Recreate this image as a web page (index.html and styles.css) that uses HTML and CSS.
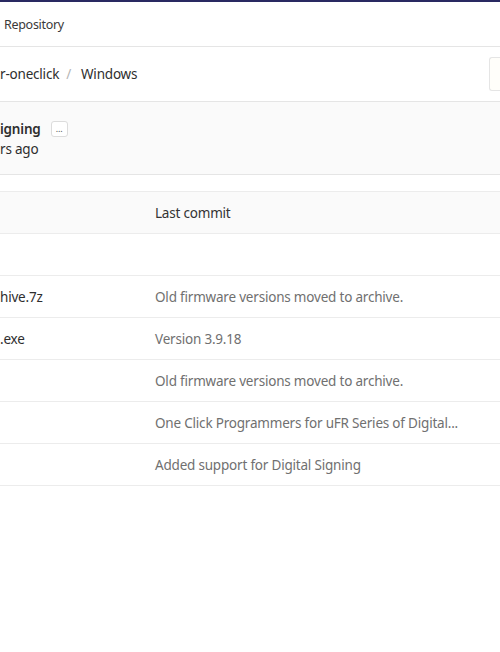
FILE: index.html
```html
<!DOCTYPE html>
<html lang="en">
<head>
    <meta charset="UTF-8">
    <title>Windows · Repository</title>
    <link rel="stylesheet" href="styles.css">
</head>
<body>

    <div class="top-line"></div>

    <div class="crumbs-bar">
        <span class="crumb">Repository</span>
    </div>

    <div class="tree-bar">
        <div class="path">
            <span class="path-part">r-oneclick</span>
            <span class="sep">/</span>
            <span class="path-part">Windows</span>
        </div>
        <div class="tree-btn"></div>
    </div>

    <div class="commit-box">
        <div class="commit-title">
            <strong>igning</strong>
            <span class="more">...</span>
        </div>
        <div class="commit-time">rs ago</div>
    </div>

    <table class="files">
        <thead>
            <tr>
                <th class="name"></th>
                <th>Last commit</th>
            </tr>
        </thead>
        <tbody>
            <tr><td class="name"></td><td class="msg"></td></tr>
            <tr><td class="name">hive.7z</td><td class="msg">Old firmware versions moved to archive.</td></tr>
            <tr><td class="name">.exe</td><td class="msg">Version 3.9.18</td></tr>
            <tr><td class="name"></td><td class="msg">Old firmware versions moved to archive.</td></tr>
            <tr><td class="name"></td><td class="msg">One Click Programmers for uFR Series of Digital...</td></tr>
            <tr><td class="name"></td><td class="msg">Added support for Digital Signing</td></tr>
        </tbody>
    </table>

</body>
</html>
```

FILE: styles.css
```css
body {
    font-family: "Noto Sans", "Open Sans", sans-serif;
    font-size: 13.5px;
    letter-spacing: -0.2px;
    color: #2e2e2e;
    background-color: #ffffff;
    margin: 0;
    overflow: hidden;
}
.top-line {
    height: 2px;
    background-color: #292961;
}
.crumbs-bar {
    height: 44px;
    display: flex;
    align-items: center;
    padding-left: 4px;
    border-bottom: 1px solid #e5e5e5;
    font-size: 12.5px;
    letter-spacing: -0.3px;
    color: #3a3a3a;
}
.tree-bar {
    height: 54px;
    display: flex;
    align-items: center;
    justify-content: space-between;
    border-bottom: 1px solid #e5e5e5;
}
.path {
    display: flex;
    align-items: center;
    color: #2e2e2e;
}
.sep {
    color: #b5b5b5;
    margin: 0 10px 0 7px;
}
.tree-btn {
    width: 14px;
    height: 32px;
    border: 1px solid #e5e5e5;
    border-right: none;
    border-radius: 3px 0 0 3px;
    margin-right: -4px;
    background-color: #fffefa;
}
.commit-box {
    height: 73px;
    box-sizing: border-box;
    padding-top: 17px;
    background-color: #fafafa;
    border-bottom: 1px solid #e5e5e5;
}
.commit-title {
    display: flex;
    align-items: center;
    line-height: 20px;
}
.commit-title strong {
    font-weight: 600;
}
.more {
    display: inline-flex;
    align-items: center;
    justify-content: center;
    width: 15px;
    height: 14px;
    margin-left: 10px;
    border: 1px solid #dcdcdc;
    border-radius: 3px;
    background-color: #ffffff;
    font-size: 9px;
    line-height: 8px;
    color: #555;
}
.commit-time {
    line-height: 20px;
}
.files {
    width: 100%;
    border-collapse: collapse;
    margin-top: 16px;
}
.files th, .files td {
    height: 41px;
    padding: 0;
    text-align: left;
    font-weight: normal;
    border-top: 1px solid #ececec;
    border-bottom: 1px solid #ececec;
}
.files th {
    background-color: #fafafa;
    color: #333;
}
.files .name {
    width: 155px;
}
.files .msg {
    color: #707070;
}
```
